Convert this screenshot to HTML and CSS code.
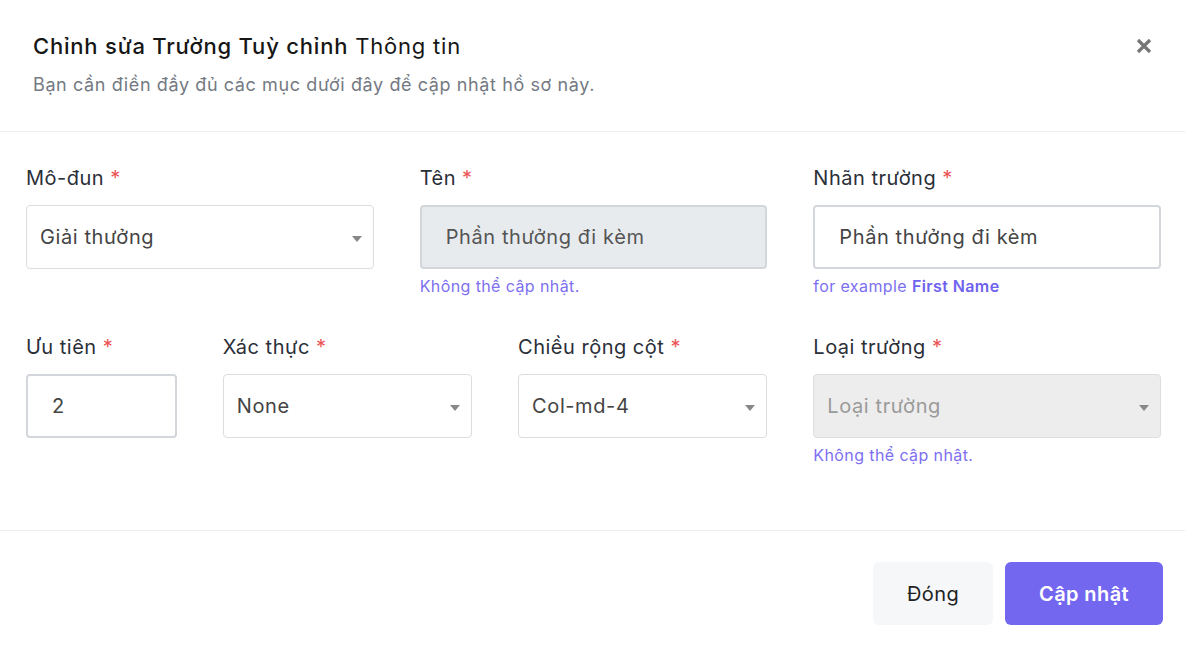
FILE: index.html
```html
<!DOCTYPE html>
<html lang="vi">
<head>
    <meta charset="utf-8" />
    <title>Chỉnh sửa Trường Tuỳ chỉnh</title>
    <link rel="stylesheet" href="styles.css">
</head>
<body>

    <div class="modal">
        <div class="modal-header">
            <div class="titles">
                <h1><strong>Chỉnh sửa Trường Tuỳ chỉnh</strong> Thông tin</h1>
                <p>Bạn cần điền đầy đủ các mục dưới đây để cập nhật hồ sơ này.</p>
            </div>
            <button class="close" type="button" aria-label="Close">
                <svg width="18" height="18" viewBox="0 0 18 18">
                    <path d="M3 3 L15 15 M15 3 L3 15" stroke="#777" stroke-width="3.2" fill="none" />
                </svg>
            </button>
        </div>

        <div class="modal-body">
            <div class="field span-4">
                <label>Mô-đun <span class="req">*</span></label>
                <div class="select">Giải thưởng</div>
            </div>
            <div class="field span-4">
                <label>Tên <span class="req">*</span></label>
                <div class="input disabled">Phần thưởng đi kèm</div>
                <small>Không thể cập nhật.</small>
            </div>
            <div class="field span-4">
                <label>Nhãn trường <span class="req">*</span></label>
                <div class="input">Phần thưởng đi kèm</div>
                <small>for example <b>First Name</b></small>
            </div>

            <div class="field span-2">
                <label>Ưu tiên <span class="req">*</span></label>
                <div class="input">2</div>
            </div>
            <div class="field span-3">
                <label>Xác thực <span class="req">*</span></label>
                <div class="select">None</div>
            </div>
            <div class="field span-3">
                <label>Chiều rộng cột <span class="req">*</span></label>
                <div class="select">Col-md-4</div>
            </div>
            <div class="field span-4">
                <label>Loại trường <span class="req">*</span></label>
                <div class="select disabled">Loại trường</div>
                <small>Không thể cập nhật.</small>
            </div>
        </div>

        <div class="modal-footer">
            <button class="btn btn-light" type="button">Đóng</button>
            <button class="btn btn-primary" type="button">Cập nhật</button>
        </div>
    </div>

</body>
</html>
```

FILE: styles.css
```css
body {
    background: #fff;
    color: #2b2f38;
    font: 20px Inter, 'Noto Sans', sans-serif;
    margin: 0;
    padding: 0;
}

.modal-header {
    display: flex;
    justify-content: space-between;
    align-items: flex-start;
    padding: 31px 32px 34px 33px;
    border-bottom: 1px solid #ebedf0;
}

    .modal-header h1 {
        font-size: 22px;
        font-weight: normal;
        letter-spacing: 0.8px;
        line-height: 30px;
        color: #161616;
        margin: 0;
    }

        .modal-header h1 strong {
            font-weight: 500;
        }

    .modal-header p {
        font-size: 18px;
        letter-spacing: 0.6px;
        line-height: 24px;
        color: #747a83;
        margin: 12px 0 0;
    }

.close {
    background: none;
    border: none;
    padding: 0;
    margin-top: 6px;
    cursor: pointer;
    line-height: 0;
}

.modal-body {
    display: grid;
    grid-template-columns: repeat(12, 1fr);
    column-gap: 46px;
    row-gap: 38px;
    padding: 33px 24px 65px 26px;
    border-bottom: 1px solid #ebedf0;
}

.span-2 { grid-column: span 2; }
.span-3 { grid-column: span 3; }
.span-4 { grid-column: span 4; }

.field label {
    display: block;
    line-height: 26px;
    letter-spacing: 0.5px;
    margin-bottom: 14px;
    color: #2b2f38;
}

.req {
    color: #ea5455;
}

.input,
.select {
    box-sizing: border-box;
    height: 64px;
    line-height: 60px;
    letter-spacing: 0.6px;
    border-radius: 4px;
    color: #444;
    white-space: nowrap;
}

.input {
    border: 2px solid #d3d6db;
    padding: 0 24px;
}

    .input.disabled {
        background: #e8ebee;
        color: #555;
    }

.select {
    position: relative;
    border: 1px solid #dcdde0;
    padding: 1px 13px 0;
}

    .select::after {
        content: "";
        position: absolute;
        right: 11px;
        top: 30px;
        border-left: 5px solid transparent;
        border-right: 5px solid transparent;
        border-top: 6px solid #888;
    }

    .select.disabled {
        background: #ededed;
        color: #9a9a9a;
    }

.field small {
    display: block;
    font-size: 16px;
    letter-spacing: 0.4px;
    line-height: 20px;
    margin-top: 7px;
    color: #7d6ff0;
}

    .field small b {
        font-weight: 600;
        color: #6e62ee;
    }

.modal-footer {
    display: flex;
    justify-content: flex-end;
    gap: 12px;
    padding: 31px 22px 26px;
}

.btn {
    height: 63px;
    border: none;
    border-radius: 6px;
    font: 20px Inter, 'Noto Sans', sans-serif;
    letter-spacing: 0.4px;
    cursor: pointer;
}

.btn-light {
    width: 120px;
    background: #f6f7f9;
    color: #222;
}

.btn-primary {
    width: 158px;
    background: #7367f0;
    color: #fff;
    font-weight: 600;
}
```
